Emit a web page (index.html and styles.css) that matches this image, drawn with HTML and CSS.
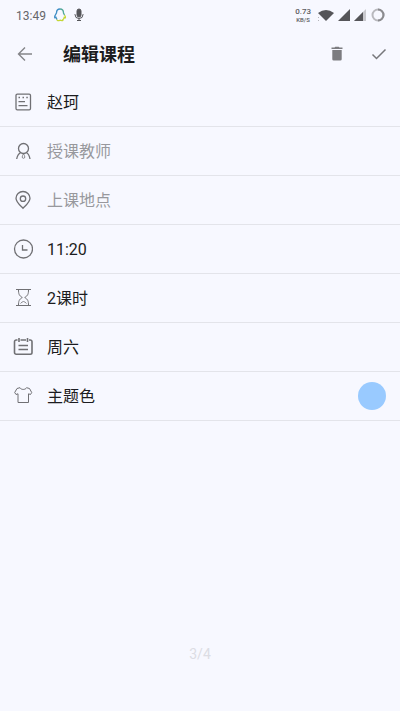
FILE: index.html
```html
<!DOCTYPE html>
<html lang="zh-CN">
<head>
<meta charset="utf-8">
<meta name="viewport" content="width=device-width, initial-scale=1">
<title>编辑课程</title>
<link rel="stylesheet" href="styles.css">
</head>
<body>
<div class="status">
  <div class="status-group">
    <span class="clock">13:49</span>
    <svg width="14" height="14" viewBox="0 0 14 14" fill="none" stroke-width="1.3">
      <path stroke="#3f8fc6" d="M7 1C4.600 1 3.500 2.700 3.500 5C2.500 6.500 1.300 8.200 1.700 9.700L3 9.300C3.300 10.500 3.700 11 4.200 11.500"/>
      <path stroke="#52a89b" d="M7 1C9.600 1 10.500 2.700 10.500 5L11.500 7"/>
      <path stroke="#c4d735" d="M11.500 7C12.500 8.500 12.700 9.500 12.100 10L11.200 9.500C10.800 11 10.300 11.400 9.800 11.700C10.500 12.600 9 13 7 12.200C5.500 13 3.700 12.800 4.200 11.500"/>
    </svg>
    <svg width="10" height="14" viewBox="0 0 10 14" fill="none" stroke="#555559">
      <rect x="3" y="1" width="4" height="8" rx="2" fill="#555559"/>
      <path d="M1 6v.5a4 4 0 0 0 8 0V6M5 10.500v2M3 12.500h4"/>
    </svg>
  </div>
  <div class="status-group status-right">
    <div class="speed"><span class="rate">0.73</span><span class="unit">KB/S</span></div>
    <svg width="18" height="14" viewBox="0 0 18 14"><path fill="#555559" d="M1 5Q9-1 17 5L9 13z"/><path stroke="#b5b5ba" d="M1 9.500h1M1 12.500h1"/></svg>
    <svg width="14" height="14" viewBox="0 0 14 14"><path fill="#555559" d="M13 1v12H1z"/></svg>
    <svg class="cell" width="14" height="14" viewBox="0 0 14 14"><path fill="#c9c9ce" d="M13 1v12H1z"/><path fill="#555559" d="M10 4v9H1z"/></svg>
    <svg width="14" height="14" viewBox="0 0 14 14" fill="none" stroke-width="2"><circle cx="7" cy="7" r="5.500" stroke="#b9b9be"/><path stroke="#8b8b8f" d="M7 1.500a5.500 5.500 0 0 1 0 11"/></svg>
  </div>
</div>
<header class="bar">
  <button class="icon-button" type="button" aria-label="返回">
    <svg width="16" height="16" viewBox="0 0 16 16" fill="none" stroke="#858589" stroke-width="1.400"><path d="M15 8H1.500M8 1.500L1.500 8L8 14.500"/></svg>
  </button>
  <h1>编辑课程</h1>
  <button class="icon-button" type="button" aria-label="删除">
    <svg width="12" height="16" viewBox="0 0 12 16" fill="#7c7c80"><path d="M.5 1.500H3.500L4.300.8H7.700L8.500 1.500H11.500V3H.5zM1.300 4h9.400v9.200a1.400 1.400 0 0 1-1.400 1.400H2.700a1.400 1.400 0 0 1-1.400-1.400z"/></svg>
  </button>
  <button class="icon-button" type="button" aria-label="保存">
    <svg width="16" height="16" viewBox="0 0 16 16" fill="none" stroke="#77777b" stroke-width="1.500"><path d="M1.500 8.500L5.500 12.500L14.500 3.500"/></svg>
  </button>
</header>
<main>
  <label class="row">
    <svg class="icon" viewBox="0 0 20 20"><rect x="3" y="2.200" width="14.500" height="15.600" rx="1.300"/><path d="M5.500 5.500h1.500M9.500 5.500h1.500M13.300 5.500h1.500M5.500 9.700h6.500M5.500 13.700h9"/></svg>
    <input type="text" value="赵珂" aria-label="课程名称">
  </label>
  <label class="row">
    <svg class="icon" viewBox="0 0 20 20"><circle cx="10.500" cy="7.500" r="5"/><path d="M7.500 11.700C5.500 12.800 4.200 15 3.700 18M13.500 11.700C15.500 12.800 16.500 15 17 18"/><path class="fine" d="M10.500 12.700C9.800 14 9.200 15 9.200 16a1.300 1.300 0 0 0 2.600 0C11.800 15 11.200 14 10.500 12.700z"/></svg>
    <input type="text" placeholder="授课教师" aria-label="授课教师">
  </label>
  <label class="row">
    <svg class="icon" viewBox="0 0 20 20"><path d="M10 18.300C6.500 14.700 3 11.800 3 8.200a7 6.700 0 0 1 14 0C17 11.800 13.500 14.700 10 18.300z"/><circle cx="10" cy="8.700" r="2.700"/></svg>
    <input type="text" placeholder="上课地点" aria-label="上课地点">
  </label>
  <button class="row" type="button">
    <svg class="icon" viewBox="0 0 20 20"><circle cx="10.500" cy="10" r="9"/><path d="M9.500 6v5H14.500"/></svg>
    <span>11:20</span>
  </button>
  <button class="row" type="button">
    <svg class="icon thin" viewBox="0 0 20 20"><path d="M3 1.500h15M3 17.500h15M5.500 1.500C5.500 6 6 7.500 9.300 9.500C6 11.500 5.500 13 5.500 17.500M15.500 1.500C15.500 6 15 7.500 11.700 9.500C15 11.500 15.500 13 15.500 17.500"/><path class="fine" d="M7.500 15.500Q9 13.700 10.500 13.500Q12 13.700 13.500 15.500"/></svg>
    <span>2课时</span>
  </button>
  <button class="row" type="button">
    <svg class="icon bold" viewBox="0 0 20 20"><path d="M4.500 3H3.200A1.700 1.700 0 0 0 1.500 4.700V15.600A1.700 1.700 0 0 0 3.200 17.300H17.300A1.700 1.700 0 0 0 19 15.600V4.700A1.700 1.700 0 0 0 17.300 3H16M7.500 3h5.500M6 1v4M14.500 1v4M5.500 8.500h9.500M5.500 12.500h9.500"/></svg>
    <span>周六</span>
  </button>
  <button class="row" type="button">
    <svg class="icon thin" viewBox="0 0 20 20"><path d="M7 1.700C8 4 12.500 4 13.500 1.700L16.500 2.500L18.700 6.500L17.500 8.500L15.500 7.800V16.500H5V7.800L3 8.500L1.700 6.500L4 2.500z"/></svg>
    <span>主题色</span>
    <span class="swatch"></span>
  </button>
</main>
<footer>3/4</footer>
</body>
</html>
```
FILE: styles.css
```css
* {
  box-sizing: border-box;
}

body {
  margin: 0;
  min-height: 100vh;
  display: flex;
  flex-direction: column;
  background: #f7f8ff;
  color: #1c1c20;
  font-family: Roboto, "Noto Sans CJK SC", sans-serif;
  font-size: 16px;
}

svg {
  display: block;
  flex: none;
}

button,
input {
  font: inherit;
  color: inherit;
  background: none;
  border: 0;
  padding: 0;
  margin: 0;
  border-radius: 0;
}

.status {
  height: 30px;
  padding: 0 15px 0 16px;
  display: flex;
  align-items: center;
  justify-content: space-between;
}

.status-group {
  display: flex;
  align-items: center;
  gap: 7px;
}

.status-right {
  gap: 2px;
}

.clock {
  font-size: 12px;
  line-height: 16px;
  padding-top: 1px;
  color: #66666a;
}

.speed {
  display: flex;
  flex-direction: column;
  align-items: center;
  margin-right: 4px;
  color: #5c5c60;
  font-weight: 500;
}

.rate {
  font-size: 8px;
  line-height: 9px;
}

.unit {
  font-size: 6px;
  line-height: 7px;
}

.cell {
  margin-right: 2px;
}

.bar {
  height: 48px;
  padding: 0 8px 0 12px;
  display: flex;
  align-items: center;
  gap: 16px;
}

.bar h1 {
  flex: 1;
  margin: 0 0 0 9px;
  padding-top: 2px;
  font-size: 18px;
  line-height: 24px;
  font-weight: 700;
}

.icon-button {
  width: 26px;
  height: 40px;
  display: flex;
  align-items: center;
  justify-content: center;
}

.row {
  width: 100%;
  height: 49px;
  padding: 0 14px 0 13px;
  display: flex;
  align-items: center;
  gap: 14px;
  border-bottom: 1px solid #e3e4ea;
  line-height: 24px;
  text-align: left;
}

.row input {
  flex: 1;
  min-width: 0;
  height: 24px;
  padding-top: 1px;
  outline: 0;
}

.row input::placeholder {
  color: #98989d;
  opacity: 1;
}

.row span {
  padding-top: 1px;
}

.icon {
  width: 20px;
  height: 20px;
  fill: none;
  stroke: #707074;
  stroke-width: 1.3;
}

.thin {
  stroke-width: 1;
}

.bold {
  stroke-width: 1.6;
}

.fine {
  stroke-width: 0.8;
}

.row .swatch {
  width: 28px;
  height: 28px;
  margin-left: auto;
  padding: 0;
  border-radius: 50%;
  background: #99caff;
}

footer {
  margin-top: auto;
  padding-bottom: 48px;
  text-align: center;
  font-size: 14px;
  line-height: 18px;
  color: #dcdde4;
}
```
